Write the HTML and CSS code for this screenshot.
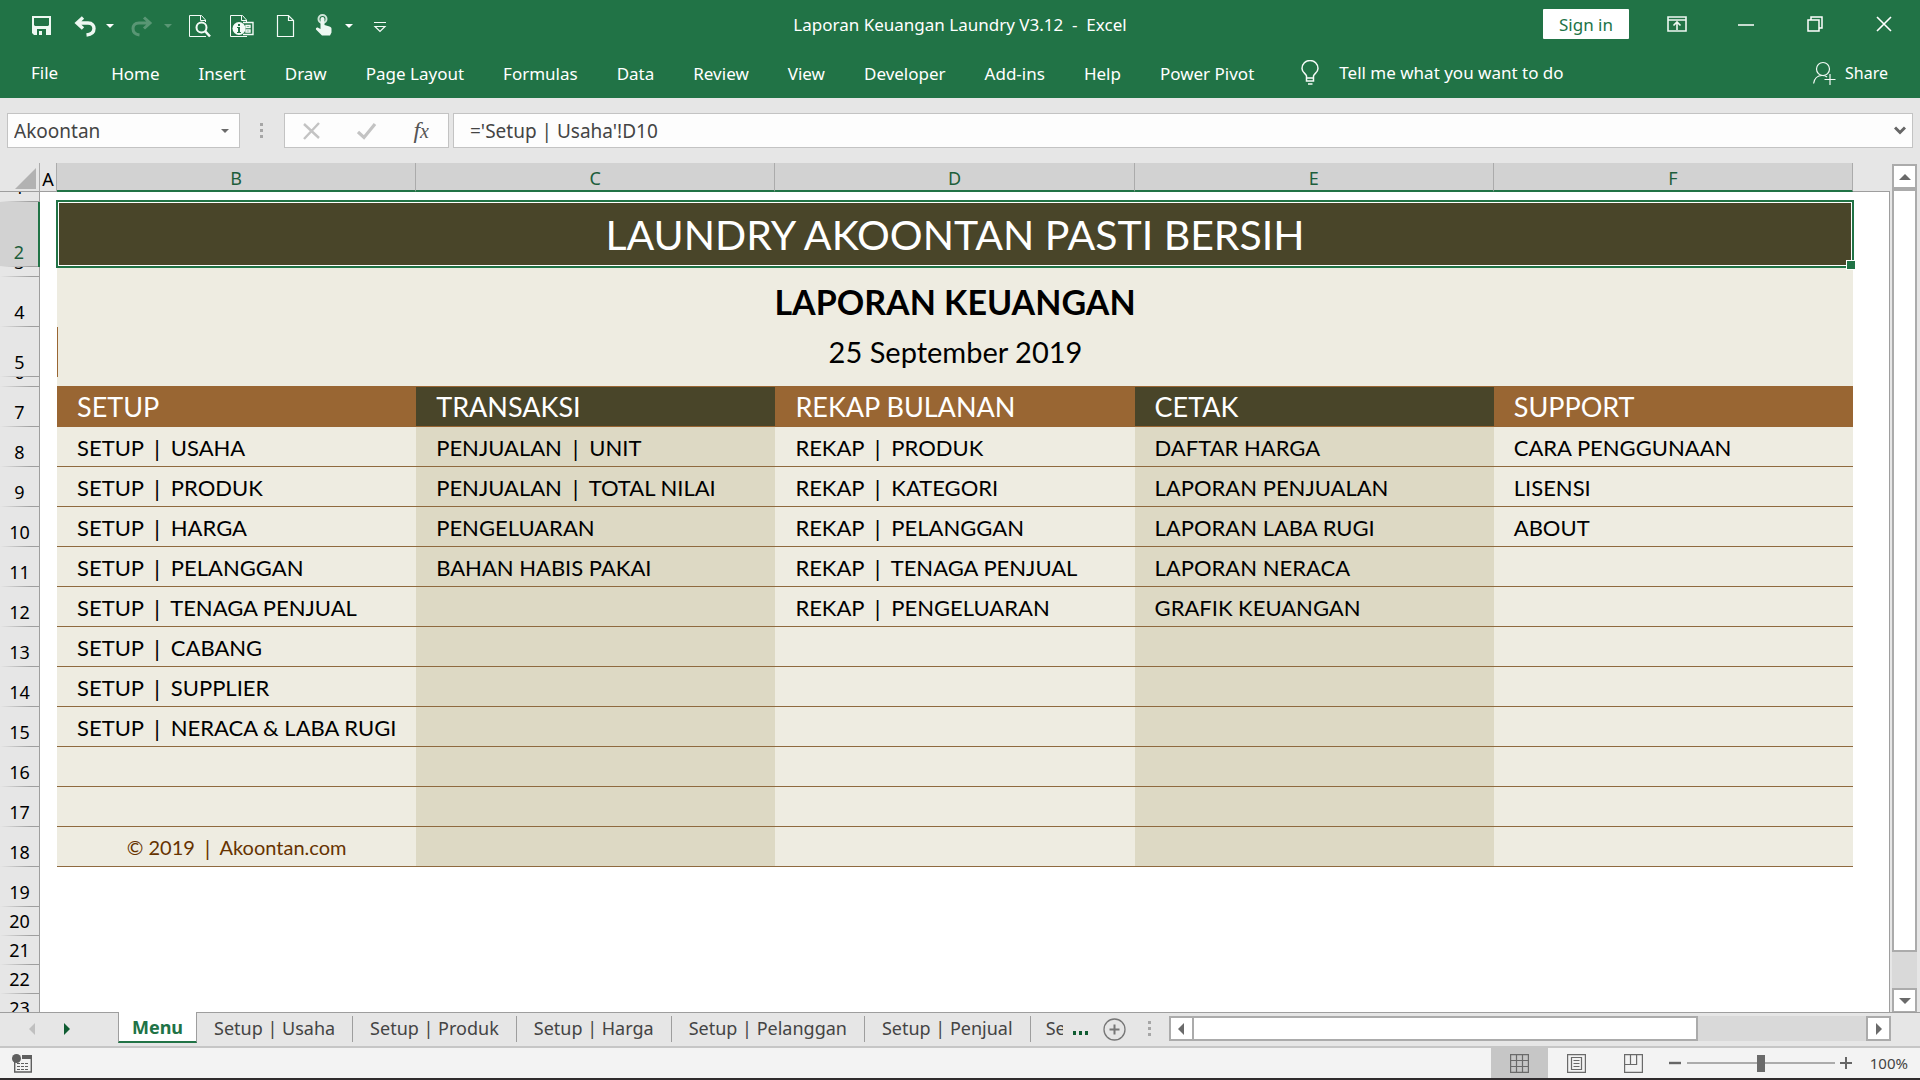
FILE: index.html
```html
<!DOCTYPE html>
<html lang="en">
<head>
<meta charset="utf-8">
<title>Laporan Keuangan Laundry V3.12 - Excel</title>
<link rel="stylesheet" href="styles.css">
</head>
<body>
<header class="ribbon">
  <div class="titlebar">
    <div class="quick">
      <button aria-label="Save"><svg width="24" height="24" viewBox="0 0 24 24"><path fill="#eef8f2" fill-rule="evenodd" d="M0 2h19v19H2l-2-2zM2 4v7l1 1h13l1-1V4zM5 15v6h2v-4h3v4h4v-6z"/></svg></button>
      <div class="split">
        <button aria-label="Undo"><svg width="24" height="24" viewBox="0 0 24 24"><path fill="none" stroke="#eef8f2" stroke-width="3.4" d="M10 3.500L4 9l6 5.500M4.500 9H15c4.500 0 6 3 6 5.500 0 4-3 6-7.500 6.500"/></svg></button>
        <button aria-label="Undo list"><svg width="8" height="24" viewBox="0 0 8 24"><path fill="#fff" d="M0 10h8l-4 4z"/></svg></button>
      </div>
      <div class="split faded">
        <button aria-label="Redo"><svg width="24" height="24" viewBox="0 0 24 24"><path fill="none" stroke="#fff" stroke-width="3" d="M13 3.500L19 9l-6 5.500M18.500 9H8c-4.500 0-6 3-6 5.500 0 4 3 6 6.500 6.500"/></svg></button>
        <button aria-label="Redo list"><svg width="8" height="24" viewBox="0 0 8 24"><path fill="#fff" d="M0 10h8l-4 4z"/></svg></button>
      </div>
      <button aria-label="Print preview"><svg width="24" height="24" viewBox="0 0 24 24"><g fill="none" stroke="#f4fbf7"><path d="M17 22.500H.5v-21h12l4 4.500v2M11.500 1.500v5h5"/><circle cx="12.500" cy="13.500" r="5" stroke-width="2"/><path stroke-width="2.600" d="M16 17l5 5.500"/></g></svg></button>
      <button aria-label="Document properties"><svg width="24" height="24" viewBox="0 0 24 24"><g fill="none" stroke="#f4fbf7"><path d="M17 22.500H.5v-21h12l4 4.500v2M11.500 1.500v5h5"/><path stroke-width="1.400" d="M13 8.500h10v12H13M16 11.500h4v2h-4zM16 16h4v2h-4z"/></g><circle cx="9" cy="14.500" r="6.500" fill="#f4fbf7"/><path fill="#217346" d="M8 10h2v2H8zM7 13h3v5h1v1H7v-1h1v-4H7z"/></svg></button>
      <button aria-label="New"><svg width="24" height="24" viewBox="0 0 24 24"><path fill="none" stroke="#f4fbf7" stroke-width="1.200" d="M6.500 1.500h11l5 5v16h-16zM17.500 1.500v5h5"/></svg></button>
      <div class="split">
        <button aria-label="Touch mode"><svg width="24" height="24" viewBox="0 0 24 24"><circle cx="10.500" cy="5" r="4" fill="none" stroke="#cfe5d8" stroke-width="2"/><path fill="#eef8f2" d="M8.500 5a2 2 0 0 1 4 0v6l5 1.500c1.500.5 2 1 2 2.500v3.500l-1.500 3H10L4 15.500c-.5-1.500 1-2.500 2.500-1.500l2 1z"/></svg></button>
        <button aria-label="Touch mode list"><svg width="8" height="24" viewBox="0 0 8 24"><path fill="#fff" d="M0 10h8l-4 4z"/></svg></button>
      </div>
      <button aria-label="Customize"><svg width="24" height="24" viewBox="0 0 24 24"><path fill="none" stroke="#f4fbf7" stroke-width="1.200" d="M4 8.500h12M5 12.500h10l-5 5z"/></svg></button>
    </div>
    <h1 class="doc-title">Laporan Keuangan Laundry V3.12&nbsp; -&nbsp; Excel</h1>
    <div class="window">
      <button class="signin">Sign in</button>
      <button class="win" aria-label="Ribbon display options"><svg width="20" height="16" viewBox="0 0 20 16"><path fill="none" stroke="#eef8f2" stroke-width="1.600" d="M1 1h18v14H1zM1 4h18M10 14V7M6.500 9.500L10 6l3.500 3.500"/></svg></button>
      <button class="win" aria-label="Minimize"><svg width="16" height="16" viewBox="0 0 16 16"><path stroke="#fff" stroke-width="1.500" d="M0 9h16"/></svg></button>
      <button class="win" aria-label="Restore"><svg width="16" height="16" viewBox="0 0 16 16"><path fill="none" stroke="#fff" stroke-width="1.500" d="M1 4h11v11H1zM4 4V1h11v11h-3"/></svg></button>
      <button class="win" aria-label="Close"><svg width="16" height="16" viewBox="0 0 16 16"><path stroke="#fff" stroke-width="1.600" d="M1 1l14 14M15 1L1 15"/></svg></button>
    </div>
  </div>
  <nav class="tabs">
    <button class="file">File</button>
    <button>Home</button>
    <button>Insert</button>
    <button>Draw</button>
    <button>Page Layout</button>
    <button>Formulas</button>
    <button>Data</button>
    <button>Review</button>
    <button>View</button>
    <button>Developer</button>
    <button>Add-ins</button>
    <button>Help</button>
    <button>Power Pivot</button>
    <button class="tell"><svg width="18" height="26" viewBox="0 0 18 26"><path fill="none" stroke="#f4fbf7" stroke-width="1.500" d="M5.500 18v-2C5 13.500 1 12.500 1 8.500a8 8 0 0 1 16 0c0 4-4 5-4.500 7.500v5h-7v-3h7"/><path stroke="#f4fbf7" stroke-width="1.500" d="M7 24h4.500"/></svg>Tell me what you want to do</button>
    <button class="share"><svg width="24" height="24" viewBox="0 0 24 24"><g fill="none" stroke="#f4fbf7" stroke-width="1.200"><circle cx="10" cy="8" r="6.500"/><path d="M.6 22.500C1.500 17 5 14.500 9 14.500c2 0 4 .5 5 1.500M11.500 18.500h11M17 13v11"/></g></svg>Share</button>
  </nav>
</header>

<section class="formula-bar">
  <div class="name-box"><input aria-label="Name box" value="Akoontan"><button aria-label="Names"><svg width="8" height="4" viewBox="0 0 8 4"><path fill="#6a6a6a" d="M0 0h8L4 4z"/></svg></button></div>
  <svg class="grip" width="3" height="16" viewBox="0 0 3 16"><path fill="#a6a6a6" d="M0 0h3v3H0zM0 6h3v3H0zM0 12h3v3H0z"/></svg>
  <div class="fx-box">
    <button aria-label="Cancel"><svg width="18" height="18" viewBox="0 0 18 18"><path stroke="#c3c3c3" stroke-width="2.400" d="M1 2l15 14M16 1L1 17"/></svg></button>
    <button aria-label="Enter"><svg width="20" height="18" viewBox="0 0 20 18"><path fill="none" stroke="#c3c3c3" stroke-width="3.200" d="M1 10l6 5.500L18 2"/></svg></button>
    <button class="fx" aria-label="Insert function"><i>f</i><i>x</i></button>
  </div>
  <div class="formula"><input aria-label="Formula" value="='Setup | Usaha'!D10"><button aria-label="Expand"><svg width="12" height="9" viewBox="0 0 12 9"><path fill="none" stroke="#666" stroke-width="3" d="M1 1.500l5 5 5-5"/></svg></button></div>
</section>

<main class="workspace">
  <div class="grid">
    <table>
      <colgroup><col class="c-num"><col class="c-a"><col><col><col><col><col><col class="c-end"></colgroup>
      <thead>
        <tr><th class="corner"><svg width="21" height="21" viewBox="0 0 21 21"><path fill="#b2b2b2" d="M21 0v21H0z"/></svg></th><th>A</th><th class="sel">B</th><th class="sel">C</th><th class="sel">D</th><th class="sel">E</th><th class="sel">F</th><th></th></tr>
      </thead>
      <tbody>
        <tr class="thin"><th><div>1</div></th><td colspan="7"></td></tr>
        <tr class="r2"><th class="sel">2</th><td></td><td colspan="5" class="company">LAUNDRY AKOONTAN PASTI BERSIH<span class="selection"></span></td><td></td></tr>
        <tr class="thin"><th><div>3</div></th><td></td><td colspan="5" class="light"></td><td></td></tr>
        <tr class="tall"><th>4</th><td></td><td colspan="5" class="light report">LAPORAN KEUANGAN</td><td></td></tr>
        <tr class="tall"><th>5</th><td></td><td colspan="5" class="light date">25 September 2019</td><td></td></tr>
        <tr class="thin"><th><div>6</div></th><td></td><td colspan="5" class="light under"></td><td></td></tr>
        <tr class="heads"><th>7</th><td></td><td>SETUP</td><td>TRANSAKSI</td><td>REKAP BULANAN</td><td>CETAK</td><td>SUPPORT</td><td></td></tr>
        <tr class="item"><th>8</th><td></td><td><a href="#">SETUP <span class="bar">|</span> USAHA</a></td><td><a href="#">PENJUALAN <span class="bar">|</span> UNIT</a></td><td><a href="#">REKAP <span class="bar">|</span> PRODUK</a></td><td><a href="#">DAFTAR HARGA</a></td><td><a href="#">CARA PENGGUNAAN</a></td><td></td></tr>
        <tr class="item"><th>9</th><td></td><td><a href="#">SETUP <span class="bar">|</span> PRODUK</a></td><td><a href="#">PENJUALAN <span class="bar">|</span> TOTAL NILAI</a></td><td><a href="#">REKAP <span class="bar">|</span> KATEGORI</a></td><td><a href="#">LAPORAN PENJUALAN</a></td><td><a href="#">LISENSI</a></td><td></td></tr>
        <tr class="item"><th>10</th><td></td><td><a href="#">SETUP <span class="bar">|</span> HARGA</a></td><td><a href="#">PENGELUARAN</a></td><td><a href="#">REKAP <span class="bar">|</span> PELANGGAN</a></td><td><a href="#">LAPORAN LABA RUGI</a></td><td><a href="#">ABOUT</a></td><td></td></tr>
        <tr class="item"><th>11</th><td></td><td><a href="#">SETUP <span class="bar">|</span> PELANGGAN</a></td><td><a href="#">BAHAN HABIS PAKAI</a></td><td><a href="#">REKAP <span class="bar">|</span> TENAGA PENJUAL</a></td><td><a href="#">LAPORAN NERACA</a></td><td></td><td></td></tr>
        <tr class="item"><th>12</th><td></td><td><a href="#">SETUP <span class="bar">|</span> TENAGA PENJUAL</a></td><td></td><td><a href="#">REKAP <span class="bar">|</span> PENGELUARAN</a></td><td><a href="#">GRAFIK KEUANGAN</a></td><td></td><td></td></tr>
        <tr class="item"><th>13</th><td></td><td><a href="#">SETUP <span class="bar">|</span> CABANG</a></td><td></td><td></td><td></td><td></td><td></td></tr>
        <tr class="item"><th>14</th><td></td><td><a href="#">SETUP <span class="bar">|</span> SUPPLIER</a></td><td></td><td></td><td></td><td></td><td></td></tr>
        <tr class="item"><th>15</th><td></td><td><a href="#">SETUP <span class="bar">|</span> NERACA &amp; LABA RUGI</a></td><td></td><td></td><td></td><td></td><td></td></tr>
        <tr class="item"><th>16</th><td></td><td></td><td></td><td></td><td></td><td></td><td></td></tr>
        <tr class="item"><th>17</th><td></td><td></td><td></td><td></td><td></td><td></td><td></td></tr>
        <tr class="item"><th>18</th><td></td><td class="copy"><a href="#">© 2019 <span class="bar">|</span> Akoontan.com</a></td><td></td><td></td><td></td><td></td><td></td></tr>
        <tr class="free"><th>19</th><td colspan="7"></td></tr>
        <tr class="small"><th>20</th><td colspan="7"></td></tr>
        <tr class="small"><th>21</th><td colspan="7"></td></tr>
        <tr class="small"><th>22</th><td colspan="7"></td></tr>
        <tr class="small"><th>23</th><td colspan="7"></td></tr>
      </tbody>
    </table>
  </div>
  <div class="vscroll">
    <button aria-label="Scroll up"><svg width="12" height="6" viewBox="0 0 12 6"><path fill="#6a6a6a" d="M6 0l6 6H0z"/></svg></button>
    <div class="thumb"></div>
    <div class="track"></div>
    <button aria-label="Scroll down"><svg width="12" height="6" viewBox="0 0 12 6"><path fill="#6a6a6a" d="M0 0h12L6 6z"/></svg></button>
  </div>
</main>

<div class="sheetbar">
  <div class="sheet-nav">
    <button aria-label="Previous sheet"><svg width="6" height="12" viewBox="0 0 6 12"><path fill="#c0c0c0" d="M6 0v12L0 6z"/></svg></button>
    <button aria-label="Next sheet"><svg width="6" height="12" viewBox="0 0 6 12"><path fill="#0f5c32" d="M0 0v12l6-6z"/></svg></button>
  </div>
  <div class="sheets">
    <button class="active">Menu</button>
    <button>Setup | Usaha</button>
    <button>Setup | Produk</button>
    <button>Setup | Harga</button>
    <button>Setup | Pelanggan</button>
    <button>Setup | Penjual</button>
    <button class="cut">Setup</button>
  </div>
  <button class="more" aria-label="More sheets"><svg width="16" height="4" viewBox="0 0 16 4"><path fill="#0f5c32" d="M0 0h3v4H0zM6 0h3v4H6zM12 0h3v4h-3z"/></svg></button>
  <button class="add" aria-label="New sheet"><svg width="23" height="23" viewBox="0 0 23 23"><circle cx="11.500" cy="11.500" r="10.500" fill="none" stroke="#777" stroke-width="1.300"/><path stroke="#777" stroke-width="2" d="M6.500 11.500h10M11.500 6.500v10"/></svg></button>
  <svg class="grip" width="3" height="16" viewBox="0 0 3 16"><path fill="#a6a6a6" d="M0 0h3v3H0zM0 6h3v3H0zM0 12h3v3H0z"/></svg>
  <div class="hscroll">
    <button aria-label="Scroll left"><svg width="6" height="12" viewBox="0 0 6 12"><path fill="#6a6a6a" d="M6 0v12L0 6z"/></svg></button>
    <div class="thumb"></div>
    <div class="track"></div>
    <button aria-label="Scroll right"><svg width="6" height="12" viewBox="0 0 6 12"><path fill="#6a6a6a" d="M0 0v12l6-6z"/></svg></button>
  </div>
</div>

<footer class="status">
  <button class="macro" aria-label="Record macro"><svg width="20" height="19" viewBox="0 0 20 19"><path fill="none" stroke="#5f5f5f" stroke-width="1.400" d="M2.700 8v10h16.600V4"/><path fill="#5f5f5f" d="M10 1h10v4H10z"/><circle cx="4.500" cy="4.500" r="4.500" fill="#5f5f5f"/><path stroke="#5f5f5f" stroke-dasharray="3 1" d="M5 9.500h12M5 12.500h12M5 15.500h12"/></svg></button>
  <div class="views">
    <button class="on" aria-label="Normal"><svg width="19" height="19" viewBox="0 0 19 19"><path fill="none" stroke="#6a6a6a" stroke-width="1.200" d="M.6.6h17.800v17.800H.6zM.6 6.500h17.800M.6 12.500h17.800M6.500.6v17.800M12.500.6v17.800"/></svg></button>
    <button aria-label="Page layout"><svg width="19" height="19" viewBox="0 0 19 19"><path fill="none" stroke="#6a6a6a" stroke-width="1.200" d="M.6.6h17.800v17.800H.6zM4.500 3.500h10v12h-10zM6.500 6.500h6M6.500 9.500h6M6.500 12.500h6"/></svg></button>
    <button aria-label="Page break preview"><svg width="19" height="19" viewBox="0 0 19 19"><path fill="none" stroke="#6a6a6a" stroke-width="1.200" d="M.6.6h17.800v17.800H.6zM.6 10.500h12V.6M6.500.6v10"/></svg></button>
  </div>
  <button class="zoom-out" aria-label="Zoom out"><svg width="12" height="12" viewBox="0 0 12 12"><path stroke="#666" stroke-width="2.400" d="M0 6h12"/></svg></button>
  <input class="zoom" type="range" min="0" max="100" value="50" aria-label="Zoom">
  <button class="zoom-in" aria-label="Zoom in"><svg width="12" height="12" viewBox="0 0 12 12"><path stroke="#666" stroke-width="2" d="M0 6h12M6 0v12"/></svg></button>
  <button class="percent">100%</button>
</footer>
</body>
</html>
```
FILE: styles.css
```css
* { box-sizing: border-box; }

body {
  margin: 0;
  height: 100vh;
  display: flex;
  flex-direction: column;
  background: #e6e6e6;
  border-bottom: 2px solid #2f2b2d;
  font-family: "Noto Sans", "Open Sans", sans-serif;
  font-size: 17px;
  color: #444;
  overflow: hidden;
}

button {
  margin: 0;
  padding: 0;
  border: 0;
  background: none;
  color: inherit;
  font: inherit;
  white-space: nowrap;
}

input {
  border: 0;
  padding: 0;
  min-width: 0;
  background: none;
  color: inherit;
  font: inherit;
}

svg { display: block; flex: none; }

/* Title bar and ribbon tabs */
.ribbon { flex: none; background: #217346; color: #fff; }

.titlebar {
  display: grid;
  grid-template-columns: 1fr auto 1fr;
  align-items: center;
  height: 48px;
}

.quick { display: flex; gap: 17px; padding-left: 32px; padding-top: 4px; }
.split { display: flex; gap: 9px; }
.faded { opacity: .25; }
.doc-title { margin: 0; font-size: 17px; font-weight: 400; white-space: pre; }
.window { display: flex; justify-content: flex-end; align-items: center; padding-right: 2px; }

.signin {
  width: 86px;
  height: 30px;
  margin-right: 13px;
  border-radius: 1px;
  background: #fff;
  color: #217346;
}

.win { width: 69px; height: 44px; display: grid; place-items: center; }

.tabs { display: flex; align-items: center; gap: 39px; height: 50px; }
.tabs button { height: 50px; line-height: 52px; }
.tabs .file { padding: 0 14px 0 31px; line-height: 50px; }
.tabs .tell { display: flex; align-items: center; gap: 20px; margin-left: 8px; line-height: 50px; }
.tabs .share { display: flex; align-items: center; gap: 8px; margin-left: auto; padding-right: 32px; font-size: 16px; }

/* Formula bar */
.formula-bar {
  flex: none;
  display: flex;
  align-items: center;
  height: 65px;
  padding: 0 7px;
  font-size: 19px;
}

.name-box, .fx-box, .formula {
  display: flex;
  align-items: center;
  height: 35px;
  background: #fdfdfd;
  border: 1px solid #c3c3c3;
}

.name-box { width: 233px; padding: 0 10px 0 6px; }
.name-box input, .formula input { flex: 1; }
.formula-bar .grip { margin: 0 21px 0 20px; }
.fx-box { width: 165px; justify-content: space-between; padding: 0 19px 0 18px; margin-right: 4px; }
.fx { font-family: "Liberation Serif", serif; font-size: 24px; line-height: 24px; color: #555; }
.fx i + i { font-size: 20px; }
.formula { flex: 1; padding: 0 6px 0 16px; }

/* Worksheet */
.workspace { flex: 1; min-height: 0; display: flex; }
.grid { flex: 1; min-width: 0; overflow: hidden; }

table {
  width: 100%;
  table-layout: fixed;
  border-spacing: 0;
  color: #000;
}

.c-num { width: 40px; }
.c-a { width: 17px; }
.c-end { width: 37px; }

th, td { padding: 0; }
th { font-weight: 400; font-size: 18px; line-height: 24px; }

thead th {
  height: 29px;
  padding-top: 3px;
  border-right: 1px solid #ababab;
  border-bottom: 1px solid #9e9e9e;
}

thead .sel { background: #d2d2d2; color: #1d5e3b; border-bottom: 2px solid #217346; }
thead th:last-child { border-right: 0; }
.corner svg { margin-left: 15px; }

tbody td { background: #fff; }
tbody td:last-child { border-right: 1px solid #9e9e9e; }

tbody th {
  border-right: 1px solid #9e9e9e;
  padding-bottom: 3px;
  vertical-align: bottom;
  background: linear-gradient(90deg, #e6e6e6, #9e9e9e 80%) bottom / 100% 1px no-repeat;
}

tbody th.sel {
  color: #1d5e3b;
  border-right: 2px solid #217346;
  background-color: #d2d2d2;
}

.thin { height: 10px; }
.thin th { padding: 0 0 1px; }
.thin div { display: flex; flex-direction: column-reverse; height: 9px; padding-bottom: 2px; overflow: hidden; }
.r2 { height: 65px; }
.tall { height: 50px; }
.heads, .item, .free { height: 40px; }
.small { height: 29px; }

tbody .light { background: #eeece1; text-align: center; }
tbody .under { border-bottom: 1px solid #996633; }

tbody .company {
  position: relative;
  background: #494529;
  color: #fff;
  text-align: center;
  font-family: Lato, "Noto Sans", sans-serif;
  font-size: 41px;
  line-height: 50px;
}

.selection {
  position: absolute;
  inset: -2px -1px -1px;
  border: 2px solid #217346;
  box-shadow: inset 0 0 0 1px #fff;
}

.selection::after {
  content: "";
  position: absolute;
  right: -4px;
  bottom: -4px;
  width: 8px;
  height: 8px;
  border: 1px solid #fff;
  background: #217346;
}

.report, .date, .heads td, .item td { font-family: Lato, "Noto Sans", sans-serif; }
.report { font-size: 34px; line-height: 40px; font-weight: 700; }
.date { font-size: 29px; line-height: 36px; border-left: 1px solid #996633; }

.heads td, .item td { padding-left: 20px; white-space: nowrap; }
.heads td { font-size: 27px; line-height: 36px; color: #fff; }
.heads td:nth-child(n+3):nth-child(-n+7) { background: #996633; border-bottom: 1px solid #996633; }
.heads td:nth-child(2n+4):nth-child(-n+6) { background: #494529; }

.item td { padding-top: 2px; font-size: 22px; line-height: 32px; }
.item td:nth-child(n+3):nth-child(-n+7) { background: #eeece1; border-bottom: 1px solid #8f6a3f; }
.item td:nth-child(2n+4):nth-child(-n+6) { background: #ddd9c4; }
.item a { color: inherit; text-decoration: none; }
.item .copy { padding: 0; text-align: center; font-size: 20px; color: #663300; }
.bar { margin: 0 2px; font-family: "Noto Sans", sans-serif; line-height: 1; }

/* Scroll bars */
.vscroll { display: flex; flex-direction: column; width: 25px; margin: 1px 3px -1px 2px; }
.hscroll { display: flex; flex: 1; height: 25px; margin-top: 3px; }

.vscroll button, .hscroll button {
  flex: none;
  display: grid;
  place-items: center;
  width: 25px;
  height: 25px;
  background: #fff;
  border: 2px solid #ababab;
}

.vscroll .thumb, .hscroll .thumb { background: #fff; border: 2px solid #ababab; }
.vscroll .thumb { flex: 765; }
.vscroll .track { flex: 36; background: #d9d9d9; }
.hscroll .thumb { flex: 504; border-left: 0; }
.hscroll .track { flex: 169; background: #d9d9d9; }

/* Sheet tabs */
.sheetbar {
  flex: none;
  display: flex;
  align-items: flex-start;
  height: 34px;
  padding-right: 29px;
  font-size: 18px;
  border-top: 1px solid #9e9e9e;
}

.sheet-nav { display: flex; gap: 29px; width: 118px; padding: 10px 0 0 29px; }
.sheets { display: flex; }
.sheets button { height: 26px; margin-top: 3px; padding: 0 17px 2px; line-height: 22px; border-right: 1px solid #9e9e9e; }

.sheets .active {
  width: 79px;
  height: 31px;
  margin-top: -1px;
  padding: 0;
  line-height: 30px;
  border: 1px solid #9e9e9e;
  border-width: 0 1px 2px;
  border-bottom-color: #217346;
  background: #fff;
  color: #217346;
  font-weight: 700;
}

.sheets .cut { width: 32px; padding: 0 0 2px 15px; border: 0; overflow: hidden; text-align: left; }
.more { margin: 18px 14px 0 10px; }
.add { margin: 5px 22px 0 0; }
.sheetbar .grip { margin: 8px 18px 0 0; }

/* Status bar */
.status {
  flex: none;
  display: flex;
  align-items: center;
  height: 32px;
  padding: 0 12px;
  background: #f3f3f3;
  border-top: 2px solid #c6c6c6;
}

.views { display: flex; margin-left: auto; }
.views button { display: grid; place-items: center; width: 57px; height: 30px; }
.views .on { background: #c6c6c6; }
.zoom-out { margin-left: 7px; }
.zoom-in { margin-left: 5px; }

.zoom {
  appearance: none;
  width: 148px;
  height: 18px;
  margin: 0 0 0 6px;
  background: linear-gradient(#ababab, #ababab) center / 100% 2px no-repeat;
}

.zoom::-webkit-slider-thumb { appearance: none; width: 8px; height: 17px; background: #6a6a6a; }
.percent { width: 56px; text-align: right; font-size: 15px; }
```
